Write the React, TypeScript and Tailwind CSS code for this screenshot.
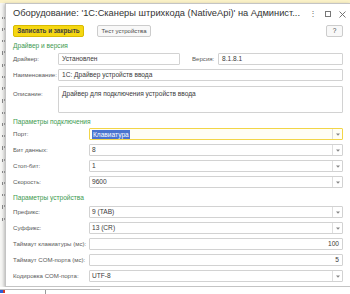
import React from "react";

const labelCls = "text-[6.1px] text-[#595959] whitespace-nowrap";

function Heading({ children, className = "" }: { children: React.ReactNode; className?: string }) {
  return (
    <div className={`h-[9px] flex items-center text-[6.6px] text-[#3c9a4f] ${className}`}>{children}</div>
  );
}

function Input({
  value,
  className = "",
  right = false,
}: {
  value?: string;
  className?: string;
  right?: boolean;
}) {
  return (
    <div
      className={`h-[12px] border border-[#d2d2d2] rounded-[1px] bg-white flex items-center px-[3px] text-[6.6px] text-[#3a3a3a] ${
        right ? "justify-end" : ""
      } ${className}`}
    >
      {value}
    </div>
  );
}

function Select({ value, focused = false }: { value: React.ReactNode; focused?: boolean }) {
  return (
    <div
      className={`flex-1 h-[12px] rounded-[1px] flex items-stretch text-[6.6px] text-[#3a3a3a] ${
        focused ? "border border-[#f2d548] bg-[#fffef5]" : "border border-[#d2d2d2] bg-white"
      }`}
    >
      <div className="flex-1 flex items-center px-[2px]">{value}</div>
      <div className="w-[10px] border-l border-[#dedede] flex items-center justify-center">
        <svg width="4" height="3" viewBox="0 0 4 3">
          <path d="M0 0.5h4L2 2.8z" fill="#888" />
        </svg>
      </div>
    </div>
  );
}

function ParamRow({ label, children, className = "" }: { label: string; children: React.ReactNode; className?: string }) {
  return (
    <div className={`flex items-center ${className}`}>
      <div className={`w-[76px] ${labelCls}`}>{label}</div>
      {children}
    </div>
  );
}

export default function App() {
  // glyph fragments of the window behind the dialog
  const leftBits = [2, 3, 2, 4, 3, 2, 3, 4, 2, 3, 2, 4, 3, 2, 3, 2, 4, 3];
  return (
    <div className="w-[350px] h-[294px] overflow-hidden bg-[#faf1c7] flex flex-col font-['Liberation_Sans',Arial,sans-serif]">
      <div className="h-[3px] shrink-0" />
      <div className="flex h-[284px] shrink-0">
        <div className="w-[5px] bg-[#f6f6f4] overflow-hidden flex flex-col items-end pt-[14px] gap-[9px]">
          {leftBits.map((h, i) => (
            <div key={i} className="flex gap-[1px]">
              <div className="w-[1px] bg-[#8a8a8a]" style={{ height: h }} />
              <div className="w-[1px] h-[2px] bg-[#aaaaaa]" />
            </div>
          ))}
        </div>
        <div className="flex-1 bg-white border-l border-t border-b border-[#c4c4c4] shadow-[-1px_1px_3px_rgba(0,0,0,0.25)] flex flex-col px-[7px]">
          {/* title bar */}
          <div className="h-[20px] flex items-center">
            <div className="flex-1 text-[9.3px] text-[#333] whitespace-nowrap">
              Оборудование: '1С:Сканеры штрихкода (NativeApi)' на Админист...
            </div>
            <div className="flex items-center gap-[8px] text-[#666] text-[8px] -mr-[3px]">
              <span>⋮</span>
              <span className="w-[6px] h-[6px] border border-[#777]" />
              <svg width="7" height="7" viewBox="0 0 7 7">
                <path d="M0.5 0.5l6 6M6.5 0.5l-6 6" stroke="#666" strokeWidth="0.9" />
              </svg>
            </div>
          </div>

          {/* buttons */}
          <div className="mt-[1px] h-[12px] flex items-stretch">
            <div className="w-[71px] bg-[#f5d712] border border-[#d9bb00] rounded-[2px] flex items-center justify-center text-[6.3px] font-bold text-[#3f3f3f]">
              Записать и закрыть
            </div>
            <div className="ml-[13px] w-[54px] bg-[#f8f8f8] border border-[#cccccc] rounded-[2px] flex items-center justify-center text-[6px] text-[#4a4a4a]">
              Тест устройства
            </div>
            <div className="flex-1" />
            <div className="w-[17px] bg-[#f8f8f8] border border-[#cccccc] rounded-[2px] flex items-center justify-center text-[6.5px] text-[#444]">
              ?
            </div>
          </div>

          <Heading className="mt-[4px]">Драйвер и версия</Heading>

          <div className="mt-[3px] flex items-center">
            <div className={`w-[45px] ${labelCls}`}>Драйвер:</div>
            <Input value="Установлен" className="w-[122px]" />
            <div className={`ml-[12px] w-[26px] ${labelCls}`}>Версия:</div>
            <Input value="8.1.8.1" className="flex-1" />
          </div>

          <div className="mt-[4px] flex items-center">
            <div className={`w-[45px] ${labelCls}`}>Наименование:</div>
            <Input value="1С: Драйвер устройств ввода" className="flex-1" />
          </div>

          <div className="mt-[5px] flex items-start">
            <div className={`w-[45px] pt-[3px] ${labelCls}`}>Описание:</div>
            <div className="flex-1 h-[27px] border border-[#d2d2d2] rounded-[1px] px-[3px] pt-[3px] text-[6.6px] text-[#3a3a3a] leading-[8px]">
              Драйвер для подключения устройств ввода
            </div>
          </div>

          <Heading className="mt-[4px]">Параметры подключения</Heading>

          <ParamRow label="Порт:" className="mt-[2px]">
            <Select
              focused
              value={<span className="bg-[#4a74d0] text-white px-[1px] leading-[9px]">Клавиатура</span>}
            />
          </ParamRow>
          <ParamRow label="Бит данных:" className="mt-[4px]">
            <Select value="8" />
          </ParamRow>
          <ParamRow label="Стоп-бит:" className="mt-[4px]">
            <Select value="1" />
          </ParamRow>
          <ParamRow label="Скорость:" className="mt-[4px]">
            <Select value="9600" />
          </ParamRow>

          <Heading className="mt-[5px]">Параметры устройства</Heading>

          <ParamRow label="Префикс:" className="mt-[4px]">
            <Select value="9 (TAB)" />
          </ParamRow>
          <ParamRow label="Суффикс:" className="mt-[4px]">
            <Select value="13 (CR)" />
          </ParamRow>
          <ParamRow label="Таймаут клавиатуры (мс):" className="mt-[4px]">
            <Input value="100" right className="flex-1" />
          </ParamRow>
          <ParamRow label="Таймаут COM-порта (мс):" className="mt-[4px]">
            <Input value="5" right className="flex-1" />
          </ParamRow>
          <ParamRow label="Кодировка COM-порта:" className="mt-[4px]">
            <Select value="UTF-8" />
          </ParamRow>
        </div>
      </div>
      <div className="h-[7px] shrink-0 bg-white flex flex-col">
        <div className="h-[2px]" />
        <div className="h-[1px] bg-[#bbbbbb] w-[100px]" />
        <div className="flex items-start h-[4px]">
          <div className="w-[3px] h-[3px] bg-[#2b5fd6]" />
          <div className="w-[2px] h-[3px] bg-[#d23b2b]" />
          <div className="ml-[40px] w-[1px] h-[4px] bg-[#999]" />
        </div>
      </div>
    </div>
  );
}
